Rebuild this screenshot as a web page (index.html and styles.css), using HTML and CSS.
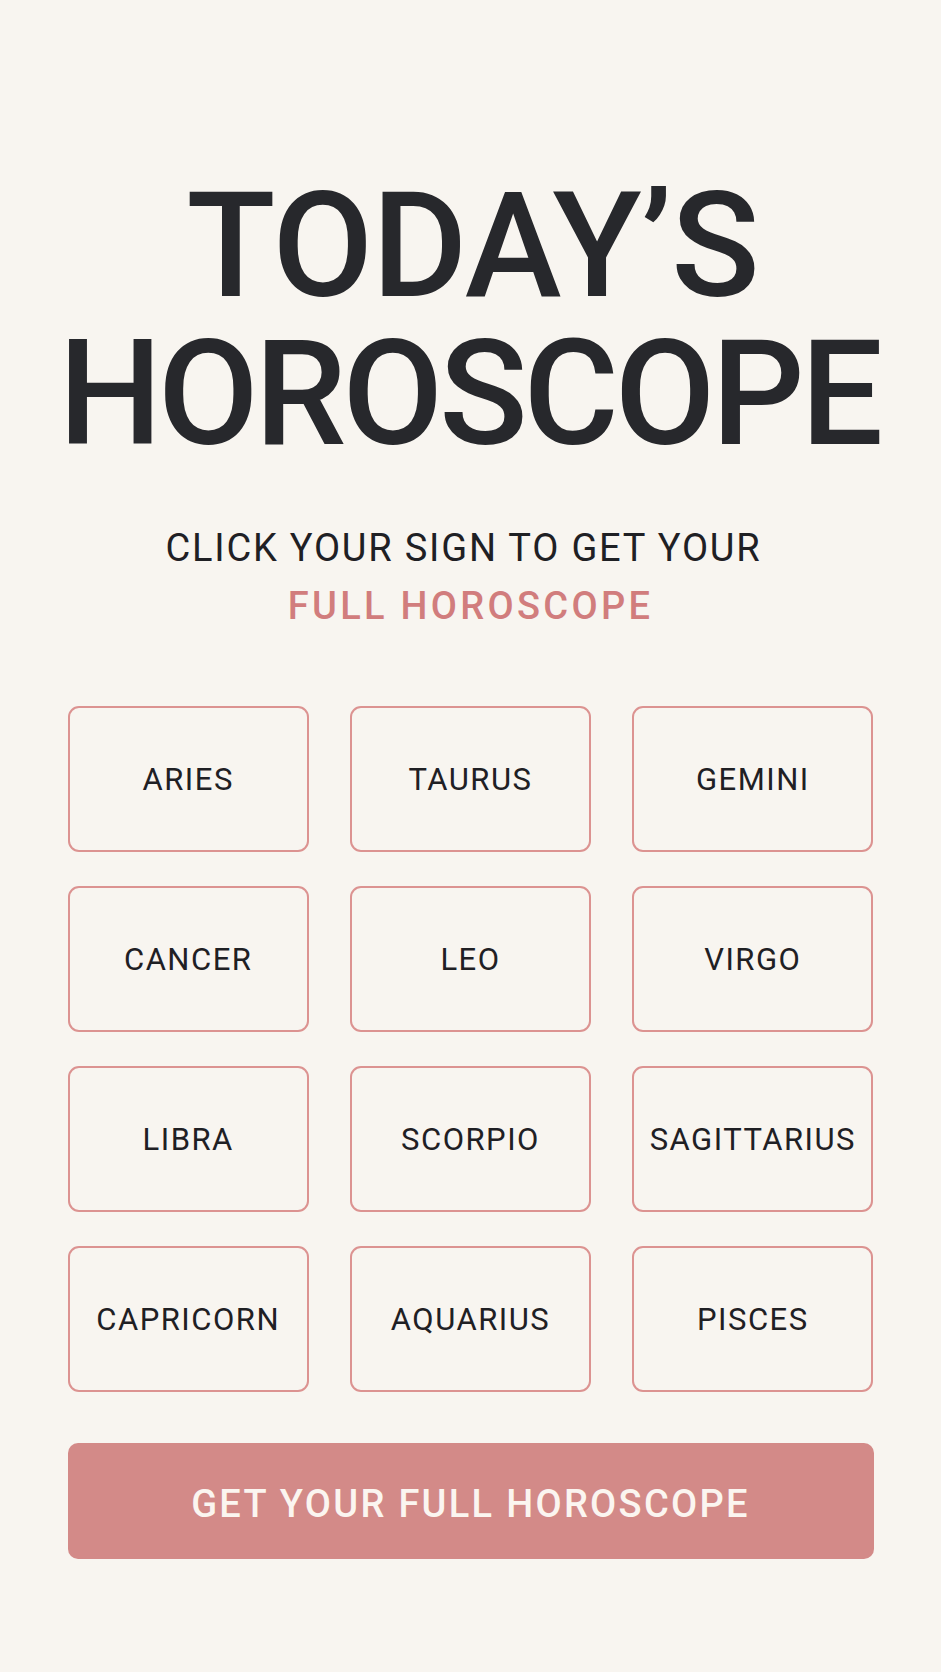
FILE: index.html
```html
<!DOCTYPE html>
<html lang="en">
<head>
    <meta charset="UTF-8">
    <meta name="viewport" content="width=device-width, initial-scale=1.0">
    <title>Today's Horoscope</title>
    <link rel="stylesheet" href="styles.css">
</head>
<body>
    <div class="container">
        <h1 class="title">
            <span class="title-top">TODAY’S</span>
            <span class="title-bottom">HOROSCOPE</span>
        </h1>

        <p class="subtitle">
            CLICK YOUR SIGN TO GET YOUR<br>
            <span class="accent">FULL HOROSCOPE</span>
        </p>

        <div class="signs" id="signs"></div>

        <button class="btn" onclick="getHoroscope()">GET YOUR FULL HOROSCOPE</button>
    </div>

    <script>
        const signs = [
            'Aries', 'Taurus', 'Gemini',
            'Cancer', 'Leo', 'Virgo',
            'Libra', 'Scorpio', 'Sagittarius',
            'Capricorn', 'Aquarius', 'Pisces'
        ];

        let selected = null;

        function renderSigns() {
            let html = '';
            signs.forEach((sign, i) => {
                html += `<div class="sign" onclick="selectSign(${i})">${sign.toUpperCase()}</div>`;
            });
            document.getElementById('signs').innerHTML = html;
        }

        function selectSign(index) {
            document.querySelectorAll('.sign').forEach(s => s.classList.remove('selected'));
            document.querySelectorAll('.sign')[index].classList.add('selected');
            selected = signs[index];
        }

        function getHoroscope() {
            if (!selected) return;
            alert('Your horoscope for ' + selected + ' is on its way.');
        }

        renderSigns();
    </script>
</body>
</html>
```
FILE: styles.css
```css
* { margin: 0; padding: 0; box-sizing: border-box; }
body {
    font-family: Roboto, "Open Sans", sans-serif;
    background: #f8f5f0;
    color: #27282c;
}
.container {
    width: 806px;
    margin: 0 auto;
    padding: 173px 0 60px;
}
.title {
    font-size: 146px;
    font-weight: 500;
    line-height: 148px;
    text-align: center;
    color: #27282c;
}
.title-top, .title-bottom { display: block; }
.title-top { letter-spacing: -1px; text-indent: 4px; }
.title-bottom { letter-spacing: -4px; text-indent: -9px; }
.subtitle {
    margin-top: 50px;
    font-size: 38px;
    font-weight: 400;
    line-height: 58px;
    letter-spacing: 1.8px;
    text-indent: -14px;
    text-align: center;
    color: #1f2024;
}
.accent { color: #d17d7d; font-weight: 500; letter-spacing: 3.3px; }
.signs {
    display: grid;
    grid-template-columns: repeat(3, 1fr);
    grid-auto-rows: 146px;
    column-gap: 41px;
    row-gap: 34px;
    margin-top: 71px;
}
.sign {
    display: flex;
    align-items: center;
    justify-content: center;
    border: 2px solid #dc9391;
    border-radius: 11px;
    font-size: 31px;
    font-weight: 400;
    letter-spacing: 1.5px;
    color: #1f2024;
    cursor: pointer;
}
.sign:hover, .sign.selected { background: #fbeeed; }
.btn {
    display: block;
    width: 100%;
    height: 116px;
    margin-top: 51px;
    padding-top: 5px;
    background: #d38a88;
    color: #fbf5f0;
    border: none;
    border-radius: 10px;
    font-family: Roboto, "Open Sans", sans-serif;
    font-size: 38px;
    font-weight: 500;
    letter-spacing: 2.3px;
    cursor: pointer;
}
.btn:hover { background: #c97a78; }
```
